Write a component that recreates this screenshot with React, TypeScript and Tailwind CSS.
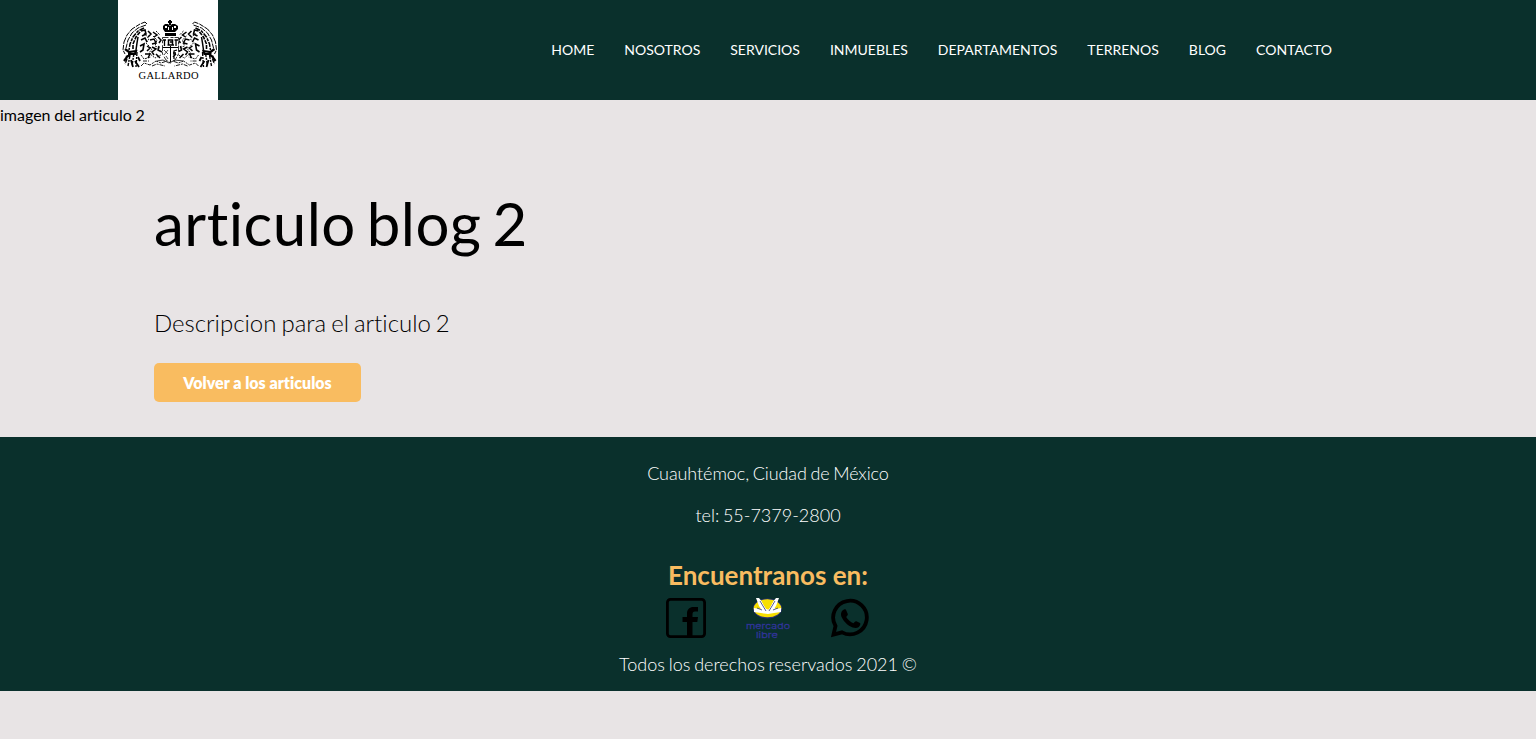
import React from "react";

const links = [
  "HOME",
  "NOSOTROS",
  "SERVICIOS",
  "INMUEBLES",
  "DEPARTAMENTOS",
  "TERRENOS",
  "BLOG",
  "CONTACTO",
];

function Wing() {
  return (
    <g fill="none" stroke="#000">
      <path d="M29 24L27 22L22 24L14 29L9 35L6 42L5 50L7 54" strokeWidth="1" strokeDasharray="7 1 5 1" />
      <path d="M28 25L20 28L14 33L10 40L8 48" strokeWidth="1" strokeDasharray="6 1" />
      <path d="M26 28L20 31L15 37L12 44L11 50" strokeWidth="1.5" strokeDasharray="5 1 3 1" />
      <path d="M22 32L18 37L15 44L15 50" strokeWidth="1.6" strokeDasharray="4 1" />
      <path d="M20 37L19 43L18 50" strokeWidth="1.5" />
      <path d="M7 49L11 52L18 51L17 54L10 54M8 57L12 55M6 61L9 57" strokeWidth="2.2" />
      <path d="M12 55L10 66M16 53L14 66M19 52L18 67M9 59L7 64" strokeWidth="1.4" strokeDasharray="4 1 2 1" />
      <path d="M13 60L15 67M17 61L21 67M20 57L22 61" strokeWidth="1.8" />
      <path d="M23 31L27 30L28 34L24 36M23 40L27 38L29 42M22 46L26 44L25 50L22 52" strokeWidth="1.6" />
      <path d="M30 31L33 34L30 37M35 32L39 35L36 37M32 40L36 39L38 43L34 44M40 37L43 40L41 43" strokeWidth="1.5" />
      <path d="M29 46L32 48L29 51M34 47L38 49L34 52L36 55M41 46L40 50L44 52M27 54L32 54L30 58M38 54L42 58" strokeWidth="1.5" />
      <path d="M26 33L31 39L28 43L34 49L31 53L37 58L43 55" strokeWidth=".9" strokeDasharray="1.6 1" />
      <path d="M23 55L26 59L33 57M35 36L39 40L37 46L42 48M38 31L42 35" strokeWidth=".9" strokeDasharray="2 1" />
      <path d="M23 66L26 63L32 65L38 61L43 63L49 61M25 61L31 61M34 66L39 64L47 66" strokeWidth=".9" strokeDasharray="4 1 2 1" />
    </g>
  );
}

function Crest() {
  return (
    <svg className="block size-[100px] bg-white" viewBox="0 0 100 100">
      <Wing />
      <g transform="translate(103.5 0) scale(-1 1)">
        <Wing />
      </g>
      <path d="M51 20H53V21H54V23H53V25H51V23H50V21H51Z" />
      <path d="M47 32L45 29V26L47 24H50L52 26L54 24H57L60 26V29L57 32ZM47 33H58V36H47Z" />
      <path d="M47 26H49V28H47ZM56 26H58V28H56ZM50 27H51V30H50ZM54 27H55V30H54Z" fill="#fff" />
      <g fill="none" stroke="#000">
        <path d="M44.500 37.500H60.500V54L57 60L52.500 63L48 60L44.500 54Z" fill="#fff" strokeWidth=".8" strokeDasharray="6 2 3 1" />
        <path d="M45 40H48M46.500 40V46M58 40V46M56.500 40H60" strokeWidth="1.3" />
        <path d="M50.500 45V40H54.500V45M49.500 45H56M52 42H54" strokeWidth="1.5" />
        <path d="M52.500 46V62M45 47.500H60" strokeWidth="1" />
        <path d="M56 59V51L59 50M55 53H58M58 54L55 57" strokeWidth="1.3" />
        <path d="M46 50L50 54M50 50L46 55M48 56L50 59" strokeWidth=".7" />
        <path d="M39 61L45 60L51 63L57 60L65 61" strokeWidth=".8" />
      </g>
      <text x="20.500" y="79" textLength="60" lengthAdjust="spacing" fontFamily="Liberation Serif, serif" fontSize="10.500">
        GALLARDO
      </text>
    </svg>
  );
}

function FacebookIcon() {
  return (
    <svg className="size-10" viewBox="0 0 40 40">
      <rect x="1.4" y="1.4" width="37.200" height="37.200" rx="3" fill="none" stroke="#000" strokeWidth="2.800" />
      <path d="M21 38V24H16.500V19H21V15.500C21 11.500 23.500 9 27.500 9H32V13.500H29C27 13.500 26.500 14.500 26.500 16.500V19H32L31.300 24H26.500V38Z" />
    </svg>
  );
}

function MercadoLibreIcon() {
  return (
    <svg className="h-10 w-[46px] overflow-visible" viewBox="0 0 46 40">
      <ellipse cx="22.500" cy="10.500" rx="14.500" ry="10" fill="#2d3277" />
      <ellipse cx="22.500" cy="10.300" rx="13.800" ry="9" fill="#f7df00" />
      <path d="M9 10L15 11L20 8L23 12L26 8L31 11L36 10V14L29 15L23 16L16 15L9 14Z" fill="#fff" />
      <path d="M11 0H14L18 5L21 12L19 15L14 8ZM34 0H31L27 5L24 12L26 15L31 8Z" fill="#fff" />
      <path d="M15 3L21 13M30 3L24 13M12 10L17 12M33 10L28 12" fill="none" stroke="#2d3277" strokeWidth=".8" />
      <path d="M17 4C20 1 25 1 28 4L24 11H21Z" fill="#f7df00" />
      <g fill="#30349a" stroke="#30349a" strokeWidth=".3" fontFamily="Inter, sans-serif" fontSize="8.2">
        <text x="1" y="30.500" textLength="44" lengthAdjust="spacingAndGlyphs">mercado</text>
        <text x="11" y="39.800" textLength="22" lengthAdjust="spacingAndGlyphs">libre</text>
      </g>
    </svg>
  );
}

function WhatsappIcon() {
  return (
    <svg className="size-10" viewBox="0 0 40 40">
      <path d="M3.500 36.500L5.500 28A16.800 16.800 0 1 1 12 34.300Z" fill="none" stroke="#000" strokeWidth="3.800" />
      <path d="M14 11.500C15.500 11 16 11.500 16.500 13L17.800 16C18.100 17 17 18 16.200 19C18 22 20.500 24.200 23.500 25.200C24.500 24.200 25.300 22.800 26.400 23.300L30 25C31 25.600 29.800 28.200 28.800 29C26.500 30.800 23 30 19.500 28C15.500 25.500 11.500 20.500 11 17C10.700 14.500 12.200 12 14 11.500Z" />
    </svg>
  );
}

export default function App() {
  return (
    <div className="min-h-screen bg-[#e8e4e5] font-[Lato,sans-serif] text-black [font-variant-ligatures:none]">
      <header className="flex h-[100px] items-center justify-between bg-[#0a302c] pr-[204px] pl-[118px]">
        <Crest />
        <nav className="flex gap-[30px] text-sm leading-5 text-white">
          {links.map((link) => (
            <a key={link} href="#">{link}</a>
          ))}
        </nav>
      </header>
      <main className="h-[337px]">
        <div className="pt-[3px] text-base leading-6 [word-spacing:-0.4px]">imagen del articulo 2</div>
        <section className="flex flex-col items-start pl-[154px]">
          <h1 className="mt-[60px] text-[60px] leading-[72px] tracking-[0.5px] [word-spacing:-5px]">articulo blog 2</h1>
          <p className="mt-[48px] text-2xl leading-8 font-light [word-spacing:-1.5px]">Descripcion para el articulo 2</p>
          <a href="#" className="mt-[24px] flex h-[39px] w-[207px] items-center justify-center rounded-[5px] bg-[#f9bc60] text-base font-extrabold text-white">
            Volver a los articulos
          </a>
        </section>
      </main>
      <footer className="flex h-[254px] flex-col items-center bg-[#0a302c] pt-[24px] text-lg leading-6 font-light text-white [word-spacing:-1.2px]">
        <p className="tracking-[-0.08px]">Cuauhtémoc, Ciudad de México</p>
        <p className="mt-[18px]">tel: 55-7379-2800</p>
        <h2 className="mt-[32px] text-[26px] leading-[32px] font-bold text-[#f9bc60] [word-spacing:0px]">Encuentranos en:</h2>
        <div className="mt-[7px] flex h-10 w-[204px] items-center justify-between">
          <FacebookIcon />
          <MercadoLibreIcon />
          <WhatsappIcon />
        </div>
        <p className="mt-[14px] [word-spacing:-1.1px]">Todos los derechos reservados 2021 ©</p>
      </footer>
    </div>
  );
}
